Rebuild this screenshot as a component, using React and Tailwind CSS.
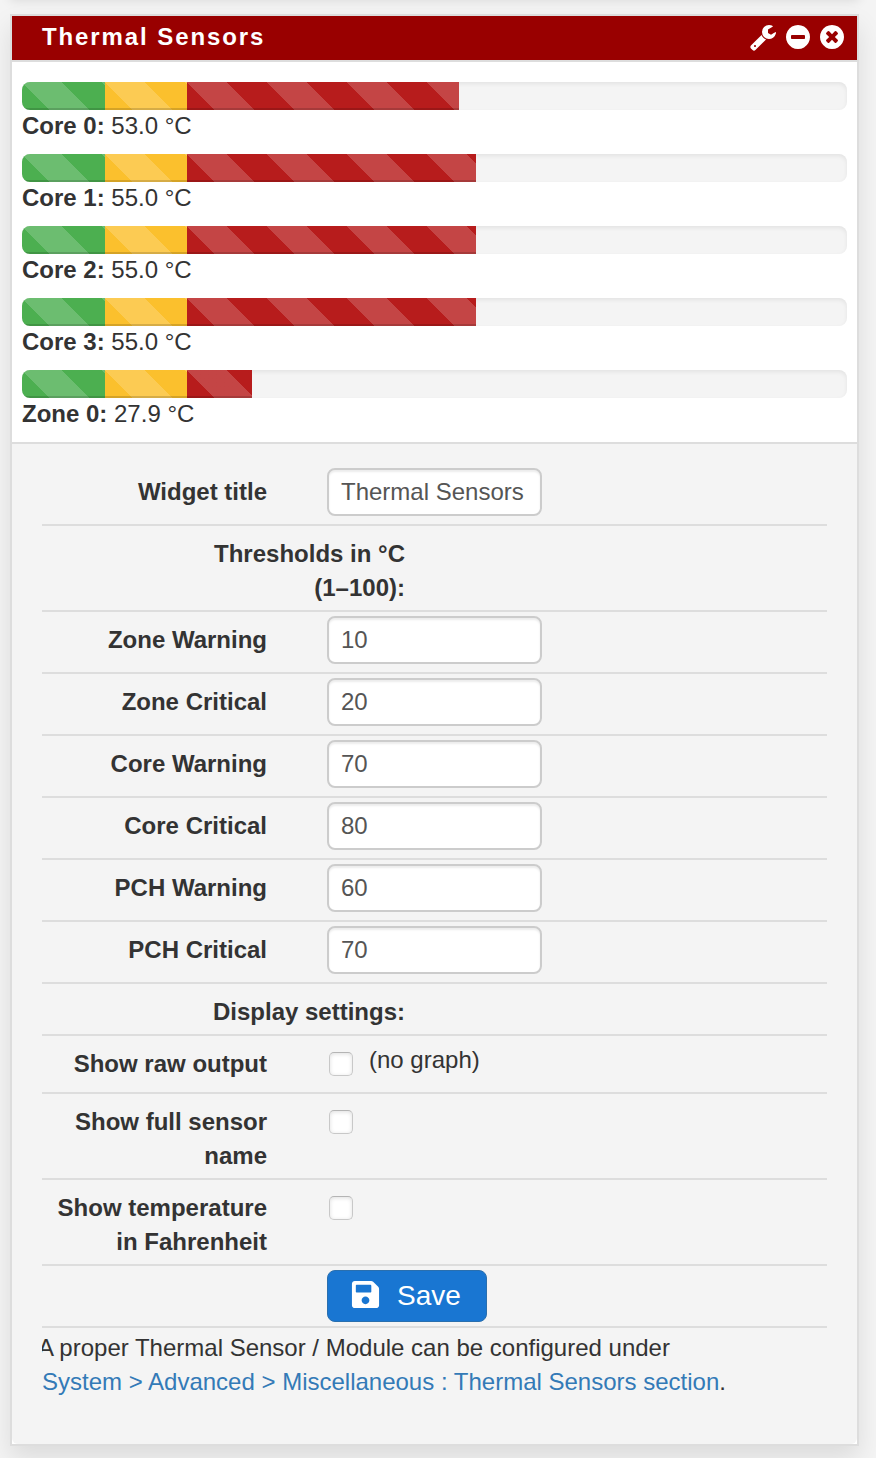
import { FaSave } from 'react-icons/fa';

const sensors = [
  { name: 'Core 0:', value: '53.0 °C', critical: 272 },
  { name: 'Core 1:', value: '55.0 °C', critical: 289 },
  { name: 'Core 2:', value: '55.0 °C', critical: 289 },
  { name: 'Core 3:', value: '55.0 °C', critical: 289 },
  { name: 'Zone 0:', value: '27.9 °C', critical: 65 },
];

const thresholds = [
  ['Zone Warning', '10'],
  ['Zone Critical', '20'],
  ['Core Warning', '70'],
  ['Core Critical', '80'],
  ['PCH Warning', '60'],
  ['PCH Critical', '70'],
];

const icons = {
  wrench:
    'M448 1472q0-26-19-45t-45-19-45 19-19 45 19 45 45 19 45-19 19-45zm644-420l-682 682q-37 37-90 37-52 0-91-37l-106-108q-38-36-38-90 0-53 38-91l681-681q39 98 114.5 173.5t173.5 114.5zm634-435q0 39-23 106-47 134-164.5 217.5t-258.5 83.5q-185 0-316.5-131.5t-131.5-316.5 131.5-316.5 316.5-131.5q58 0 121.5 16.5t107.5 46.5q16 11 16 28t-16 28l-293 169v224l193 107q5-3 79-48.5t135.5-81 70.5-35.5q15 0 23.5 10t8.5 25z',
  minus:
    'M1344 960v-128q0-26-19-45t-45-19h-768q-26 0-45 19t-19 45v128q0 26 19 45t45 19h768q26 0 45-19t19-45zm320-64q0 209-103 385.5t-279.5 279.5-385.5 103-385.5-103-279.5-279.5-103-385.5 103-385.5 279.5-279.5 385.5-103 385.5 103 279.5 279.5 103 385.5z',
  close:
    'M1277 1122q0-26-19-45l-181-181 181-181q19-19 19-45 0-27-19-46l-90-90q-19-19-46-19-26 0-45 19l-181 181-181-181q-19-19-45-19-27 0-46 19l-90 90q-19 19-19 46 0 26 19 45l181 181-181 181q-19 19-19 45 0 27 19 46l90 90q19 19 46 19 26 0 45-19l181-181 181 181q19 19 45 19 27 0 46-19l90-90q19-19 19-46zm387-226q0 209-103 385.5t-279.5 279.5-385.5 103-385.5-103-279.5-279.5-103-385.5 103-385.5 279.5-279.5 385.5-103 385.5 103 279.5 279.5 103 385.5z',
};

function Icon({ name }) {
  return (
    <svg viewBox="0 0 1792 1792" className="h-[28px] w-[28px]" fill="currentColor">
      <path d={icons[name]} />
    </svg>
  );
}

const stripes =
  'h-full bg-[linear-gradient(45deg,rgba(255,255,255,.18)_25%,transparent_25%,transparent_50%,rgba(255,255,255,.18)_50%,rgba(255,255,255,.18)_75%,transparent_75%,transparent)] bg-[length:80px_80px] shadow-[inset_0_-2px_0_rgba(0,0,0,.15)]';

function Sensor({ name, value, critical }) {
  return (
    <div className="h-[72px]">
      <div className="flex h-[28px] overflow-hidden rounded-[8px] bg-[#f4f4f4] shadow-[inset_0_2px_4px_rgba(0,0,0,.07)]">
        <div className={`${stripes} w-[83px] bg-[#4caf50]`} />
        <div className={`${stripes} w-[82px] bg-[#fbc02d]`} />
        <div className={`${stripes} bg-[#b71c1c]`} style={{ width: critical }} />
      </div>
      <div className="h-[32px] leading-[32px]">
        <b>{name}</b> {value}
      </div>
    </div>
  );
}

function Row({ label, height, wide, children }) {
  return (
    <div className="flex items-start border-b-2 border-[#ddd]" style={{ height }}>
      <div
        className={`${wide ? 'w-[363px] pl-[150px]' : 'w-[225px]'} shrink-0 pt-[11px] text-right font-bold leading-[34px] whitespace-pre-line`}
      >
        {label}
      </div>
      <div className={wide ? 'hidden' : 'ml-[60px] flex'}>{children}</div>
    </div>
  );
}

function Field({ value }) {
  return (
    <input
      className="mt-[4px] h-[48px] w-[215px] rounded-[8px] border-2 border-[#ccc] bg-white px-[12px] text-[24px] text-[#555] shadow-[inset_0_2px_2px_rgba(0,0,0,.075)] outline-none"
      defaultValue={value}
    />
  );
}

function Check() {
  return (
    <input
      type="checkbox"
      className="mt-[16px] ml-[2px] h-[24px] w-[24px] shrink-0 appearance-none rounded-[5px] border border-[#c8c8c8] border-t-[#b4b4b4] bg-white shadow-[inset_0_1px_4px_rgba(0,0,0,.13)]"
    />
  );
}

export default function App() {
  return (
    <div className="flex h-[1458px] flex-col overflow-hidden bg-[#f4f4f4] font-['Liberation_Sans',Arial,sans-serif] text-[24px] text-[#333]">
      <div className="mx-[10px] h-[14px] shrink-0">
        <div className="-mt-[20px] h-[20px] w-[849px] shadow-[0_0_12px_rgba(0,0,0,.12)]" />
      </div>
      <div className="ml-[10px] h-[1432px] w-[849px] shrink-0 border-2 border-[#ddd] bg-white shadow-[0_12px_24px_rgba(0,0,0,.1)]">
        <header className="flex h-[46px] items-center justify-between border-b-2 border-[#ddd] bg-[#900] pr-[11px] pl-[30px] text-white">
          <h1 className="-mt-[2px] font-bold tracking-[1.9px]">Thermal Sensors</h1>
          <div className="-mt-[2px] flex gap-[6.5px]">
            <Icon name="wrench" />
            <Icon name="minus" />
            <Icon name="close" />
          </div>
        </header>
        <section className="h-[380px] px-[10px] pt-[20px]">
          {sensors.map((s) => (
            <Sensor key={s.name} {...s} />
          ))}
        </section>
        <section className="h-[1002px] rounded-b-[6px] border-t-2 border-[#ddd] bg-[#f4f4f4] px-[30px] pt-[20px]">
          <Row height={62} label="Widget title">
            <Field value="Thermal Sensors" />
          </Row>
          <Row wide height={86} label={'Thresholds in °C\n(1–100):'} />
          {thresholds.map(([label, value]) => (
            <Row key={label} height={62} label={label}>
              <Field value={value} />
            </Row>
          ))}
          <Row wide height={52} label="Display settings:" />
          <Row height={58} label="Show raw output">
            <Check />
            <span className="mt-[7px] ml-[16px] leading-[34px]">(no graph)</span>
          </Row>
          <Row height={86} label={'Show full sensor\nname'}>
            <Check />
          </Row>
          <Row height={86} label={'Show temperature\nin Fahrenheit'}>
            <Check />
          </Row>
          <Row height={62} label="">
            <button className="mt-[4px] flex h-[52px] w-[160px] items-center rounded-[8px] border border-[#2a6fae] bg-[#1976d2] pl-[22px] text-[28px] text-white">
              <FaSave className="-mt-[3px] mr-[16px] text-[31px]" />
              Save
            </button>
          </Row>
          <p className="overflow-hidden pt-[3px] leading-[34px]">
            <span className="-ml-[4px]">A proper Thermal Sensor / Module can be configured under</span>
            <br />
            <a className="text-[#337ab7]">System &gt; Advanced &gt; Miscellaneous : Thermal Sensors section</a>.
          </p>
        </section>
      </div>
    </div>
  );
}
